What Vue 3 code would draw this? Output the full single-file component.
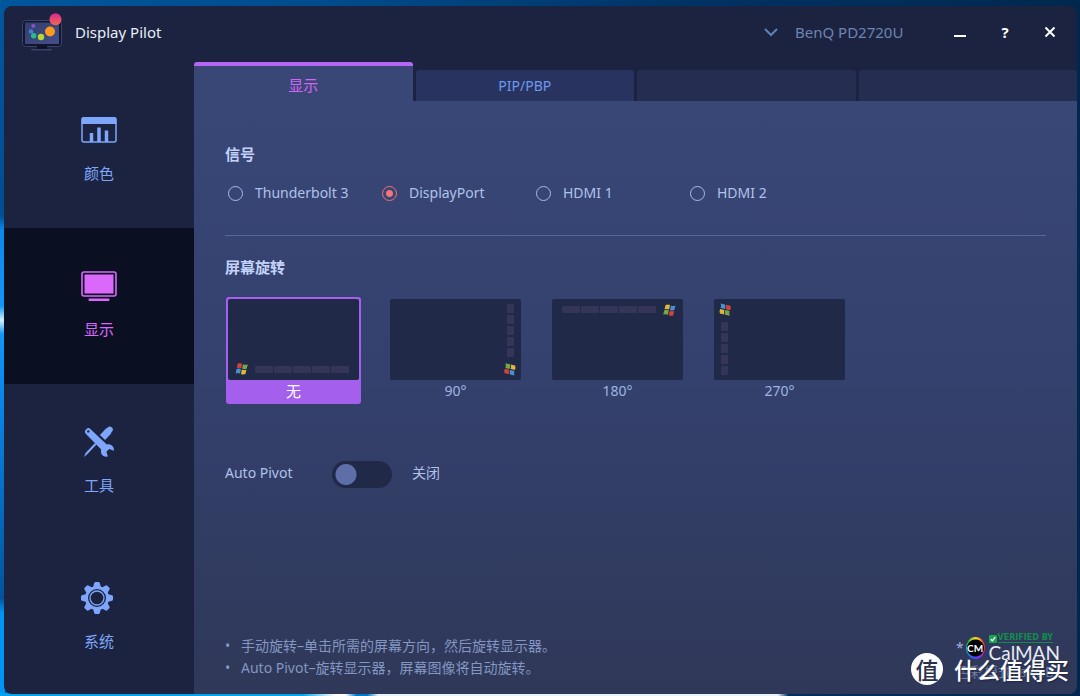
<script setup>
import { ref } from 'vue'

const section = ref('display')
const sections = [
  { id: 'color', label: '颜色' },
  { id: 'display', label: '显示' },
  { id: 'tools', label: '工具' },
  { id: 'system', label: '系统' },
]

const tab = ref('显示')
const tabs = ['显示', 'PIP/PBP', '', '']

const signal = ref('DisplayPort')
const signals = ['Thunderbolt 3', 'DisplayPort', 'HDMI 1', 'HDMI 2']

const rotation = ref(0)
const rotations = [
  { deg: 0, label: '无' },
  { deg: 90, label: '90°' },
  { deg: 180, label: '180°' },
  { deg: 270, label: '270°' },
]

const autoPivot = ref(false)
const monitor = ref('BenQ PD2720U')
const teeth = [0, 45, 90, 135, 180, 225, 270, 315]
</script>

<template>
  <div class="desktop">
    <div class="window">
      <header class="titlebar">
        <svg class="logo" viewBox="0 0 42 38" aria-hidden="true">
          <defs>
            <linearGradient id="lcd" x1="0" y1="0" x2="1" y2="1">
              <stop offset="0" stop-color="#343d6c" />
              <stop offset="1" stop-color="#444f8a" />
            </linearGradient>
            <linearGradient id="ball" x1="0" y1="0" x2="0" y2="1">
              <stop offset="0" stop-color="#d8288c" />
              <stop offset="1" stop-color="#f26a50" />
            </linearGradient>
          </defs>
          <rect x="1.500" y="7.500" width="39" height="26" rx="3" fill="#12172e" stroke="#38426c" />
          <rect x="4" y="9.500" width="34" height="21.500" fill="url(#lcd)" />
          <rect x="16" y="32.500" width="10" height="4" fill="#0e1328" />
          <rect x="10" y="36" width="21" height="1.500" rx="0.700" fill="#38426c" />
          <circle cx="12.300" cy="13" r="2" fill="#8355c8" />
          <circle cx="10" cy="18.400" r="2.200" fill="#4a7bdc" />
          <circle cx="12.700" cy="22.700" r="2.700" fill="#22c08c" />
          <circle cx="20" cy="24" r="3.200" fill="#b4d835" />
          <circle cx="29" cy="18.500" r="5" fill="#fb9a20" />
          <circle cx="34.500" cy="6.300" r="6" fill="url(#ball)" />
        </svg>
        <h1 class="title">Display Pilot</h1>
        <label class="monitor">
          <svg viewBox="0 0 14 9" aria-hidden="true"><path d="M1 1l6 6 6-6" /></svg>
          <select v-model="monitor" aria-label="Monitor">
            <option>BenQ PD2720U</option>
          </select>
        </label>
        <div class="actions">
          <button type="button" aria-label="Minimize">
            <svg viewBox="0 0 14 14"><path d="M1 11h12" /></svg>
          </button>
          <button type="button" aria-label="Help"><span class="help">?</span></button>
          <button type="button" aria-label="Close">
            <svg viewBox="0 0 14 14"><path d="M2.500 2.500l9 9M11.500 2.500l-9 9" /></svg>
          </button>
        </div>
      </header>

      <div class="body">
        <nav class="sidebar">
          <button
            v-for="s in sections"
            :key="s.id"
            type="button"
            class="nav"
            :class="{ active: section === s.id }"
            @click="section = s.id"
          >
            <svg v-if="s.id === 'color'" viewBox="0 0 38 34" aria-hidden="true">
              <rect x="2" y="5" width="34" height="24" rx="2" fill="none" stroke="currentColor" stroke-width="1.500" />
              <path d="M1.500 6a2 2 0 0 1 2-2h31a2 2 0 0 1 2 2v5h-35z" fill="currentColor" />
              <path d="M11.500 29v-9M19 29v-14.500M26.500 29v-11.500" stroke="currentColor" stroke-width="3.500" />
            </svg>
            <svg v-else-if="s.id === 'display'" viewBox="0 0 38 34" aria-hidden="true">
              <rect x="2" y="3" width="34" height="24" rx="2" fill="none" stroke="currentColor" stroke-width="1.600" />
              <rect x="4.500" y="5.500" width="29" height="19" fill="currentColor" />
              <rect x="8.500" y="29.500" width="21" height="2.500" rx="1" fill="currentColor" />
            </svg>
            <svg v-else-if="s.id === 'tools'" viewBox="0 0 38 34" aria-hidden="true">
              <path d="M4 32l1.500-4L15 18l1.500 1.500L7 29.500z" fill="currentColor" />
              <path d="M22.500 12.500L29 5.500" stroke="currentColor" stroke-width="7" />
              <path d="M29 5.500l.8-.8" stroke="currentColor" stroke-width="6" stroke-linecap="round" />
              <path
                d="M6.200 4.200a3 3 0 0 1 4.400 0L26.800 19.600c2.400-.8 4.900 0 6.200 2.200.8 1.300 1 2.600.8 3.900l-4.600-1.600-2.800 2.600 1.500 4.900c-3 .6-5.500-.6-6.500-2.900-.6-1.400-.6-2.700-.2-4.100L6 9a3.300 3.300 0 0 1 .2-4.800z"
                fill="currentColor"
              />
              <circle cx="8.300" cy="6.400" r="1.200" fill="#1b2340" />
            </svg>
            <svg v-else class="gear" viewBox="0 0 38 34" aria-hidden="true">
              <g fill="currentColor">
                <path
                  v-for="a in teeth"
                  :key="a"
                  d="M15 6.500l1.200-4.500q.3-1 1.300-1h3q1 0 1.300 1L23 6.500z"
                  :transform="`rotate(${a} 19 17)`"
                />
              </g>
              <circle cx="19" cy="17" r="10.500" fill="none" stroke="currentColor" stroke-width="3" />
              <circle cx="19" cy="17" r="7" fill="none" stroke="currentColor" stroke-width="1.300" />
            </svg>
            <span>{{ s.label }}</span>
          </button>
        </nav>

        <main class="main">
          <div class="tabs" role="tablist">
            <button
              v-for="(t, i) in tabs"
              :key="i"
              type="button"
              role="tab"
              class="tab"
              :class="{ active: tab === t, empty: !t }"
              :aria-selected="tab === t"
              :disabled="!t"
              @click="tab = t"
            >{{ t }}</button>
          </div>

          <div class="panel">
            <section>
              <h2>信号</h2>
              <div class="signals">
                <label v-for="s in signals" :key="s" class="signal">
                  <input v-model="signal" type="radio" name="signal" :value="s" />
                  <span>{{ s }}</span>
                </label>
              </div>
            </section>

            <section class="rotation">
              <h2>屏幕旋转</h2>
              <div class="thumbs">
                <button
                  v-for="r in rotations"
                  :key="r.deg"
                  type="button"
                  class="thumb"
                  :class="['r' + r.deg, { active: rotation === r.deg }]"
                  :aria-pressed="rotation === r.deg"
                  @click="rotation = r.deg"
                >
                  <span class="screen">
                    <svg class="flag" viewBox="0 0 14 14" aria-hidden="true">
                      <path d="M2.800 1.600q2.200-.9 4.400.2L6.200 6.200q-2.200-1-4.400-.1z" fill="#d8413b" />
                      <path d="M8.100 2.300q2.200 1 4.700.1l-1.100 4.400q-2.300.9-4.600-.2z" fill="#77a844" />
                      <path d="M1.600 7q2.200-.9 4.400.1L5 11.500q-2.200-1-4.400-.1z" fill="#4a90d0" />
                      <path d="M6.900 7.500q2.300 1 4.600.2l-1.100 4.400q-2.200.9-4.500-.2z" fill="#e0b53c" />
                    </svg>
                    <span class="bar"><i v-for="n in 5" :key="n"></i></span>
                  </span>
                  <span class="caption">{{ r.label }}</span>
                </button>
              </div>
            </section>

            <div class="pivot">
              <label for="pivot">Auto Pivot</label>
              <input id="pivot" v-model="autoPivot" type="checkbox" role="switch" />
              <span>{{ autoPivot ? '开启' : '关闭' }}</span>
            </div>

            <footer class="foot">
              <ul>
                <li>手动旋转–单击所需的屏幕方向，然后旋转显示器。</li>
                <li>Auto Pivot–旋转显示器，屏幕图像将自动旋转。</li>
              </ul>
              <div class="calman">
                <div class="brand">
                  <span class="star">*</span>
                  <span class="cm"><b>CM</b></span>
                  <span class="words">
                    <span class="verified">
                      <svg viewBox="0 0 8 8" aria-hidden="true">
                        <rect width="8" height="8" rx="1" fill="#16a550" />
                        <path d="M1.800 4.200l1.600 1.600 2.900-3.700" fill="none" stroke="#fff" stroke-width="1.300" />
                      </svg>
                      <span>VERIFIED BY</span>
                    </span>
                    <span class="name">CalMAN</span>
                  </span>
                </div>
                <div class="mode">色彩模式: sRGB</div>
              </div>
            </footer>
          </div>
        </main>
      </div>
    </div>

    <div class="watermark">
      <span class="seal">值</span>
      <span>什么值得买</span>
    </div>
  </div>
</template>

<style>
body {
  margin: 0;
}
</style>

<style scoped>
* {
  box-sizing: border-box;
}

.desktop {
  position: relative;
  display: flex;
  min-height: 100vh;
  padding: 6px 3px 2px 4px;
  font-family: "Noto Sans", "Noto Sans CJK SC", sans-serif;
  font-size: 14px;
  line-height: 20px;
  background:
    linear-gradient(90deg, #00a4ee 0 28%, #fff 31% 32%, #0078c8 33% 34%, #e8f4fa 35% 72%, transparent 73%) bottom / 100% 3px no-repeat,
    linear-gradient(180deg, #00569c, #004e94 31%, #0a88e8 33%, #1496f4 44%, #d0f0ff 46%, #1496f4 48%, #0a8cf0 54%, #00549c 86%, #0094f4 88%) left / 5px 100% no-repeat,
    linear-gradient(90deg, #00569c, #004c8c 30%, #003264 65%, #00284e);
}

.window {
  flex: 1;
  display: flex;
  flex-direction: column;
  overflow: hidden;
  border-radius: 8px;
  background: #1b2340;
}

button,
select {
  margin: 0;
  padding: 0;
  border: 0;
  background: none;
  color: inherit;
  font: inherit;
  cursor: pointer;
}

.titlebar {
  display: flex;
  align-items: center;
  height: 56px;
  padding: 0 15px 4px 17px;
}

.logo {
  width: 42px;
  height: 38px;
}

.title {
  margin: 0 auto 0 12px;
  font-size: 15px;
  font-weight: 400;
  color: #e8ecf8;
}

.monitor {
  display: flex;
  align-items: center;
  gap: 17px;
  font-size: 15px;
  color: #6f83b0;
}

.monitor svg {
  width: 14px;
  height: 9px;
  fill: none;
  stroke: #5f82b4;
  stroke-width: 2;
}

.monitor select {
  appearance: none;
  width: 113px;
}

.actions {
  display: flex;
  gap: 21px;
  margin-left: 40px;
}

.actions button {
  display: grid;
  place-items: center;
  width: 24px;
  height: 24px;
  color: #fff;
}

.actions svg {
  width: 14px;
  height: 14px;
  fill: none;
  stroke: #fff;
  stroke-width: 2;
}

.help {
  font-size: 15px;
  font-weight: 700;
}

.body {
  flex: 1;
  display: flex;
}

.sidebar {
  flex: 0 0 190px;
  display: flex;
  flex-direction: column;
  padding-top: 10px;
}

.nav {
  display: flex;
  flex-direction: column;
  align-items: center;
  gap: 16px;
  height: 156px;
  padding-top: 41px;
  font-size: 15px;
  color: #7ea6fa;
}

.nav:last-child {
  height: auto;
}

.nav svg {
  width: 38px;
  height: 34px;
}

.nav .gear {
  margin-right: 4px;
}

.nav.active {
  background: #0a1022;
  color: #d968fb;
}

.main {
  flex: 1;
  display: flex;
  flex-direction: column;
}

.tabs {
  display: grid;
  grid-template-columns: repeat(4, 1fr);
  align-items: end;
  gap: 3px;
  height: 39px;
}

.tab {
  height: 31px;
  border-radius: 3px 3px 0 0;
  background: #28345f;
  color: #6d98f0;
}

.tab.empty {
  background: #252e51;
}

.tab.active {
  height: 39px;
  padding-top: 2px;
  border-top: 4px solid #b566f5;
  background: #394777;
  font-size: 15px;
  color: #d663f5;
}

.panel {
  flex: 1;
  display: flex;
  flex-direction: column;
  padding: 43px 31px 15px;
  background: linear-gradient(#394777, #34416e 45%, #2f3858);
  color: #b0c2ea;
}

h2 {
  margin: 0;
  font-size: 15px;
  font-weight: 700;
  line-height: 20px;
  color: #c3d3f8;
}

.signals {
  display: flex;
  padding: 19px 0 32px 3px;
  border-bottom: 1px solid #56689a;
}

.signal {
  display: flex;
  align-items: center;
  gap: 12px;
  width: 154px;
}

.signal input {
  appearance: none;
  width: 15px;
  height: 15px;
  margin: 0;
  border: 1px solid #a3bcec;
  border-radius: 50%;
}

.signal input:checked {
  border-color: #f07078;
  background: radial-gradient(circle, #f87474 0 3px, transparent 4px);
}

.rotation {
  padding-top: 21px;
}

.thumbs {
  display: flex;
  gap: 27px;
  margin-top: 20px;
  padding-left: 1px;
}

.thumb {
  display: flex;
  flex-direction: column;
  width: 135px;
  padding: 2px;
  border-radius: 3px;
  color: #9db4e2;
}

.thumb.active {
  background: #a460ec;
  color: #fff;
}

.screen {
  display: flex;
  height: 81px;
  border-radius: 2px;
  background: #202947;
}

.flag {
  width: 14px;
  height: 14px;
}

.bar {
  display: flex;
  gap: 1px;
}

.bar i {
  width: 18px;
  height: 7px;
  border-radius: 1px;
  background: #353559;
}

.r0 .screen {
  align-items: flex-end;
  gap: 6px;
  padding: 4px 7px;
}

.r0 .bar,
.r180 .bar {
  padding: 3px 0;
}

.r180 .screen {
  flex-direction: row-reverse;
  align-items: flex-start;
  gap: 6px;
  padding: 4px 7px;
}

.r180 .flag {
  transform: rotate(180deg);
}

.r90 .screen {
  flex-direction: column-reverse;
  align-items: flex-end;
  gap: 5px;
  padding: 4px;
}

.r90 .flag {
  transform: rotate(-90deg);
}

.r270 .screen {
  flex-direction: column;
  align-items: flex-start;
  gap: 5px;
  padding: 4px;
}

.r270 .flag {
  transform: rotate(90deg);
}

.r90 .bar,
.r270 .bar {
  flex-direction: column;
  gap: 2px;
  padding: 0 3px;
}

.r90 .bar i,
.r270 .bar i {
  width: 7px;
  height: 9px;
}

.caption {
  line-height: 22px;
}

.active .caption {
  font-size: 15px;
}

.pivot {
  display: flex;
  align-items: center;
  margin-top: 57px;
}

.pivot label,
.pivot span {
  padding-bottom: 3px;
}

.pivot label {
  width: 107px;
}

.pivot input {
  appearance: none;
  width: 60px;
  height: 27px;
  margin: 0 20px 0 0;
  border-radius: 14px;
  background: radial-gradient(circle at 14px 50%, #5d6ea9 0 10px, transparent 11px) #202947;
}

.pivot input:checked {
  background: radial-gradient(circle at 46px 50%, #d968fb 0 10px, transparent 11px) #202947;
}

.foot {
  display: flex;
  justify-content: space-between;
  align-items: flex-end;
  margin-top: auto;
  color: #8496c2;
}

.foot ul {
  margin: 0;
  padding: 0;
  list-style: none;
  line-height: 22px;
}

.foot li {
  display: flex;
}

.foot li::before {
  content: "•";
  width: 16px;
}

.calman {
  width: 104px;
  margin: 0 -14px -3px 0;
}

.brand {
  display: flex;
  align-items: center;
  gap: 2px;
}

.star {
  color: #9db0dc;
}

.cm {
  display: grid;
  place-items: center;
  width: 22px;
  height: 22px;
  border-radius: 50%;
  background:
    radial-gradient(circle, #000 0 8px, transparent 9px),
    conic-gradient(#f5e020, #f06020, #e02080, #8030f0, #2060f0, #10c0d0, #20c040, #f5e020);
}

.cm b {
  font: 700 10px/12px Lato, sans-serif;
  color: #fff;
}

.words {
  display: flex;
  flex-direction: column;
  margin-left: 2px;
}

.verified {
  display: flex;
  align-items: center;
  gap: 1px;
  font: 700 8px/8px "DejaVu Sans", sans-serif;
  white-space: nowrap;
  color: #128c4c;
}

.verified span {
  border-bottom: 1px solid #128c4c;
}

.verified svg {
  width: 8px;
  height: 8px;
}

.name {
  font: 400 19px/19px Lato, sans-serif;
  color: #e8ebf4;
}

.mode {
  white-space: nowrap;
  color: #6f80aa;
}

.watermark {
  position: absolute;
  right: 11px;
  bottom: 11px;
  display: flex;
  align-items: center;
  gap: 11px;
  font-family: "Noto Sans CJK SC", sans-serif;
  font-size: 23px;
  font-weight: 500;
  line-height: 32px;
  color: #fff;
  text-shadow: 1px 1px 2px #1b2340;
}

.seal {
  display: grid;
  place-items: center;
  width: 32px;
  height: 32px;
  border-radius: 50%;
  background: #fff;
  color: #29304c;
  text-shadow: none;
}
</style>
